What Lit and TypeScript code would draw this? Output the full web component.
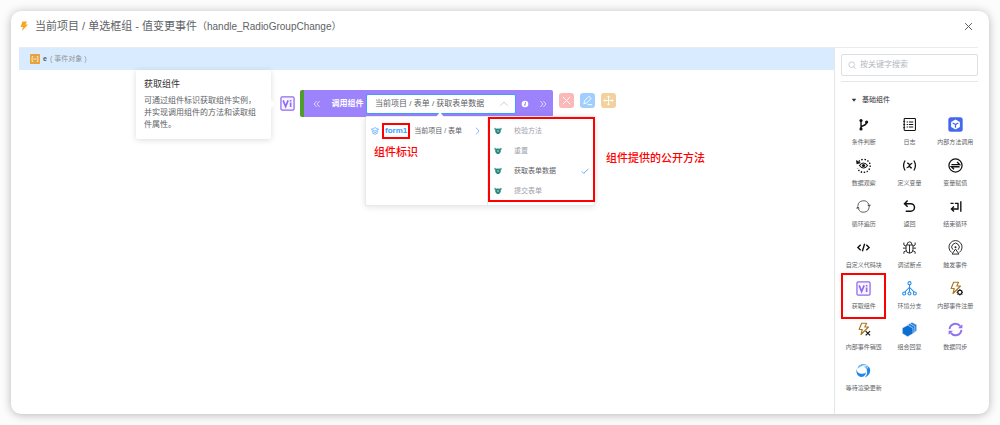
import { LitElement, html, css, svg, SVGTemplateResult } from "lit";
import { customElement, state } from "lit/decorators.js";
import { classMap } from "lit/directives/class-map.js";

interface Tool {
  label: string;
  icon: SVGTemplateResult;
  marked?: boolean;
}

const viIcon = svg`
  <rect x="1.500" y="1.500" width="21" height="21" rx="2" fill="#f8f4ff" stroke="#8d6bef" stroke-width="2"/>
  <path d="M5 7l4 10 4-10M17 10.500v7M17 6.500v2.300" fill="none" stroke="#8d6bef" stroke-width="2.600"/>`;

const bolt = svg`<path d="M9 2h8l-3 6h6L8 20l2-8H5z" fill="none" stroke="#a87820" stroke-width="1.800" stroke-linejoin="round"/>`;

const crescent = svg`<path d="M2 9Q4 1 13 1.500q4 .5 6 3-6-2-9 0Q5 7 2 9z"/>`;

const tools: Tool[] = [
  {
    label: "条件判断",
    icon: svg`<g fill="none" stroke="#111" stroke-width="2.200"><path d="M8 6v13M8 16c1-3 9-1 9-8"/></g>
      <circle cx="8" cy="5.500" r="2.500" fill="#111"/><circle cx="8" cy="19" r="2.500" fill="#111"/><circle cx="17" cy="8" r="2.500" fill="#111"/>`,
  },
  {
    label: "日志",
    icon: svg`<rect x="3.500" y="2.500" width="18" height="19" rx="1" fill="none" stroke="#111" stroke-width="1.700"/>
      <path d="M7.500 8h2M7.500 12h2M7.500 16h2M11 8h7M11 12h7M11 16h7" stroke="#111" stroke-width="1.800"/>
      <path d="M2 7h3M2 12h3M2 17h3" stroke="#111" stroke-width="1.500"/>`,
  },
  {
    label: "内部方法调用",
    icon: svg`<rect x="0.500" y="0.500" width="23" height="23" rx="4" fill="#4468ee"/>
      <path d="M12 4l7 4v8l-7 4-7-4V8z" fill="#fff"/>
      <path d="M7.500 9.500L12 12.200l4.500-2.700M12 12v5" fill="none" stroke="#4468ee" stroke-width="2"/>`,
  },
  {
    label: "数据观察",
    icon: svg`<path d="M4.500 5.500A10.500 10.500 0 1 1 2.500 16.500" fill="none" stroke="#111" stroke-width="2.300" stroke-dasharray="2.300 2.500"/>
      <path d="M0 3l1 7 7-2z" fill="#111"/>
      <path d="M5.500 12q6.500-8 13 0-6.500 8-13 0z" fill="none" stroke="#111" stroke-width="1.800"/><circle cx="12" cy="12" r="2.500" fill="#111"/>`,
  },
  {
    label: "定义变量",
    icon: svg`<path d="M5 4q-5 8 0 16M19 4q5 8 0 16" fill="none" stroke="#111" stroke-width="2"/>
      <path d="M8 8.500q3-1 4 3.500t4 3.500M16.500 8.500q-2-.5-4.500 3.500t-4.500 3.500" fill="none" stroke="#111" stroke-width="2"/>`,
  },
  {
    label: "变量赋值",
    icon: svg`<circle cx="12" cy="12" r="10.500" fill="none" stroke="#111" stroke-width="2"/>
      <path d="M5.500 10.500h13l-4-4M18.500 14h-13l4 4" fill="none" stroke="#111" stroke-width="2.200"/>`,
  },
  {
    label: "循环遍历",
    icon: svg`<path d="M3 11a9 9 0 0 1 17.500-2M21 13A9 9 0 0 1 3.500 15" fill="none" stroke="#555" stroke-width="1.500"/>
      <path d="M18 9h6l-3 4zM0 15h6L3 11z" fill="#555"/>`,
  },
  {
    label: "返回",
    icon: svg`<path d="M9 2.500L4 7.500l5 5M4.500 7.500H14a6 6 0 0 1 0 12H6" fill="none" stroke="#111" stroke-width="2.400"/>`,
  },
  {
    label: "结束循环",
    icon: svg`<path d="M4 7h5M11 7h5v9H6M9.500 12L5.500 16l4 4M20.500 3.500v17" fill="none" stroke="#111" stroke-width="2.200"/>`,
  },
  {
    label: "自定义代码块",
    icon: svg`<path d="M7.500 7.500L3 12l4.500 4.500M16.500 7.500L21 12l-4.500 4.500M13.800 6l-3.600 12" fill="none" stroke="#111" stroke-width="2.200"/>`,
  },
  {
    label: "调试断点",
    icon: svg`<g fill="none" stroke="#222" stroke-width="1.500"><path d="M6.500 8h11v7.500a5.500 5.500 0 0 1-11 0zM8 8a4 5 0 0 1 8 0M12 8v13"/>
      <path d="M6.500 13H1.500M22.500 13h-5M6.500 10L3 8V4M17.500 10L21 8V4M7 17l-4 2v3M17 17l4 2v3"/></g>`,
  },
  {
    label: "触发事件",
    icon: svg`<g fill="none" stroke="#222" stroke-width="1.500"><path d="M6 20a10.500 10.500 0 1 1 12 0"/><path d="M7.800 15.500a6 6 0 1 1 8.400 0"/>
      <path d="M12 14.500l5.500 8h-11z"/></g><circle cx="12" cy="11.500" r="1.600" fill="#222"/>`,
  },
  { label: "获取组件", icon: viIcon, marked: true },
  {
    label: "环境分支",
    icon: svg`<g fill="none" stroke="#2b8be6" stroke-width="1.700"><circle cx="12" cy="3.500" r="2.500"/><circle cx="3.500" cy="20" r="2.400"/><circle cx="12" cy="20" r="2.400"/><circle cx="20.500" cy="20" r="2.400"/>
      <path d="M12 6v11.500M12 10l-7.500 7.700M12 10l7.500 7.700"/></g>`,
  },
  {
    label: "内部事件注册",
    icon: svg`${bolt}<circle cx="19" cy="18" r="3.300" fill="#fff" stroke="#111" stroke-width="1.800"/>
      <path d="M19 12.700v2M19 21.300v2M13.700 18h2M22.300 18h2M15.300 14.300l1.300 1.300M21.400 20.400l1.300 1.300M15.300 21.700l1.300-1.300M21.400 15.600l1.300-1.300" stroke="#111" stroke-width="1.500"/>`,
  },
  {
    label: "内部事件销毁",
    icon: svg`${bolt}<path d="M15.500 14.500l7 7M22.500 14.500l-7 7" stroke="#111" stroke-width="1.900"/>`,
  },
  {
    label: "组合回复",
    icon: svg`<g stroke="#fff" stroke-width=".8"><path d="M16 .5l7.500 4V14L18 18V7l-6-4z" fill="#1f7ddb"/><path d="M12.500 2.500l8 4.500v9l-5 4V9.500L8 5z" fill="#1f7ddb"/>
      <path d="M9 5l8.500 4.700v8.800L9 23.500.5 18.300V9.700z" fill="#0b6ed0"/></g>`,
  },
  {
    label: "数据同步",
    icon: svg`<path d="M2.500 11.500a9.500 9.500 0 0 1 17-5M21.500 12.500a9.500 9.500 0 0 1-17 5" fill="none" stroke="#9270ee" stroke-width="3"/>
      <path d="M23 3.500v6.500h-7zM1 20.500v-6.500h7z" fill="#9270ee"/>`,
  },
  {
    label: "等待渲染更新",
    icon: svg`<g fill="#65b5f8">${crescent}</g>
      <g fill="#2384ea"><path d="M1 9q0 7 7 8 5 .5 8-2-1 7-8 7.500Q-1 20 1 9z"/><path d="M20.500 5.500q5 8-1 14-2 2-5.500 3.500 5-5 3.500-9.500-1-4 3-8z"/></g>
      <path d="M12.500 6q6-2 7.500-1-3 3-3 6-1-4-4.500-5z" fill="#65b5f8"/>`,
  },
];

const bear = svg`<circle cx="4" cy="6" r="3.500" fill="#6dada4"/><circle cx="20" cy="6" r="3.500" fill="#6dada4"/>
  <path d="M4 7q8-5 16 0 2 8-3 12l-5 3-5-3Q2 15 4 7z" fill="#23897d"/><circle cx="12" cy="12" r="3" fill="#9bd8cf"/><circle cx="12" cy="12" r="1.300" fill="#134f49"/>`;

@customElement("app-root")
export class AppRoot extends LitElement {
  @state() private method = "获取表单数据";
  private methods = ["校验方法", "重置", "获取表单数据", "提交表单"];

  static styles = css`
    :host {
      display: flex;
      box-sizing: border-box;
      min-height: 100vh;
      padding: 11px;
      background: #fcfcfc;
      color: #606266;
      font: 8px/12px "Liberation Sans", "Noto Sans CJK SC", sans-serif;
    }
    * { box-sizing: border-box; }
    button, input { font: inherit; color: inherit; margin: 0; padding: 0; border: 0; background: none; }
    button { cursor: pointer; }
    svg { display: block; flex: none; width: 8px; height: 8px; }
    .dialog {
      flex: 1;
      display: flex;
      flex-direction: column;
      min-width: 0;
      padding: 0 11px 0 8px;
      border-radius: 10px;
      background: #fff;
      box-shadow: 0 1px 10px rgba(0, 0, 0, 0.28);
    }
    .head { display: flex; align-items: center; height: 37px; padding: 0 5px 6px 1px; border-bottom: 1px solid #ececec; }
    .head svg { width: 8px; height: 10px; }
    .title { flex: 1; margin: 0 0 0 7px; font-size: 11px; font-weight: 400; line-height: 16px; white-space: nowrap; }
    .title small { font-size: 10px; }
    .head .close svg { width: 9px; height: 9px; }
    .body { flex: 1; display: flex; min-height: 0; }
    .main { flex: 1; display: flex; flex-direction: column; min-width: 0; }
    .event { display: flex; align-items: center; gap: 3px; height: 22px; padding-left: 11px; background: #d9ecff; color: #909399; font-size: 7px; }
    .event svg { width: 10px; height: 10px; }
    .event b { color: #555; }
    .canvas { position: relative; flex: 1; }
    .node { position: absolute; left: 261px; top: 20px; display: flex; align-items: center; gap: 5px; }
    .node > svg { width: 15px; height: 15px; }
    .call { display: flex; align-items: center; width: 253px; height: 27px; border-left: 4px solid #4f9c2c; border-radius: 2px; background: #9c83fc; color: #fff; }
    .fold { width: 25px; display: grid; place-items: center; }
    .call .name { width: 37px; font-weight: 700; text-align: center; white-space: nowrap; }
    .select { display: flex; align-items: center; width: 150px; height: 20px; padding: 0 7px 0 8px; border: 1px solid #409eff; border-radius: 2px; background: #fff; color: #606266; }
    .select input { flex: 1; min-width: 0; outline: 0; }
    .info { width: 17px; display: grid; place-items: center; }
    .more { flex: 1; display: grid; place-items: center; }
    .actions { display: flex; gap: 6px; padding-bottom: 6px; margin-left: 1px; }
    .actions button { display: grid; place-items: center; width: 15px; height: 15px; border-radius: 3px; }
    .actions svg { width: 11px; height: 11px; }
    .del { background: #fbb8b8; }
    .edit { background: #a0cfff; }
    .move { background: #f3d19e; }
    .tip {
      position: absolute; left: 117px; top: 0; width: 135px; padding: 8px 0 8px 8px;
      border-radius: 2px; background: #fff; box-shadow: 0 1px 6px rgba(0, 0, 0, 0.14);
    }
    .tip::after { content: ""; position: absolute; right: -4px; top: 30px; border: 4px solid transparent; border-right: 0; border-left-color: #fff; }
    .tip h2 { margin: 0 0 5px; color: #303133; font-size: 9px; font-weight: 400; line-height: 12px; }
    .tip p { width: 118px; margin: 0; }
    .menu {
      position: absolute; left: 346px; top: 46px; display: grid; grid-template-columns: 122px 108px; width: 230px; height: 90px;
      border: 1px solid #e8eaee; border-radius: 2px; background: #fff; box-shadow: 0 1px 6px rgba(0, 0, 0, 0.12); font-size: 7px;
    }
    .menu::before { content: ""; position: absolute; left: 70px; top: -5px; border: 4px solid transparent; border-top: 0; border-bottom: 5px solid #fff; }
    .forms { border-right: 1px solid #e8eaee; }
    .form { display: flex; align-items: center; width: 100%; height: 18px; margin-top: 5px; padding: 0 6px 0 5px; text-align: left; white-space: nowrap; }
    .form .id { height: 16px; margin: 0 4px 0 3px; padding: 0 1px; border: 2px solid #f00; color: #409eff; font-size: 8px; font-weight: 700; }
    .form .path { flex: 1; }
    .mark { margin: 0; color: #f00; font-size: 11px; font-weight: 500; line-height: 16px; white-space: nowrap; }
    .forms .mark { margin: 4px 0 0 8px; }
    .methods { display: flex; flex-direction: column; width: 107px; height: 85px; padding-top: 2px; border: 2px solid #f00; }
    .method { display: flex; align-items: center; gap: 12px; flex: none; height: 20px; padding: 0 4px; color: #a0a3a9; text-align: left; }
    .method span { flex: 1; }
    .method.on { color: #606266; }
    .outer { position: absolute; left: 587px; top: 80px; }
    .side { width: 144px; padding: 6px 0 0 6px; border-left: 1px solid #e6e6e6; }
    .search { display: flex; align-items: center; gap: 4px; height: 22px; padding: 0 6px; border: 1px solid #dcdfe6; border-radius: 2px; }
    .search input { flex: 1; min-width: 0; outline: 0; }
    .search input::placeholder { color: #b4b7be; opacity: 1; }
    .group { display: flex; align-items: center; gap: 5px; width: 100%; height: 28px; margin-top: 5px; padding: 8px 0 0 10px; border-top: 1px solid #e6e6e6; color: #303133; font-size: 7px; }
    .group svg { width: 6px; height: 6px; }
    .tools { display: grid; grid-template-columns: repeat(3, 1fr); margin-top: 8px; }
    .tool { position: relative; display: flex; flex-direction: column; align-items: center; gap: 6px; height: 41px; font-size: 6px; line-height: 8px; white-space: nowrap; }
    .tool svg { width: 15px; height: 15px; }
    .tool.marked::after { content: ""; position: absolute; inset: -8px 1px 3px 0; border: 2px solid #f00; }
  `;

  private icon(body: SVGTemplateResult) {
    return html`<svg viewBox="0 0 24 24" aria-hidden="true">${body}</svg>`;
  }

  private line(d: string, color: string, width = 2) {
    return this.icon(svg`<path d=${d} fill="none" stroke=${color} stroke-width=${width}/>`);
  }

  render() {
    return html`
      <section class="dialog" role="dialog" aria-labelledby="title">
        <header class="head">
          <svg viewBox="0 0 16 20" aria-hidden="true"><path d="M5 1h9l-3 6h5L4 20l2-8H1z" fill="#f5a623"/></svg>
          <h1 class="title" id="title">当前项目 / 单选框组 - 值变更事件<small>（handle_RadioGroupChange）</small></h1>
          <button class="close" aria-label="关闭">${this.line("M3 3l18 18M21 3L3 21", "#555", 2.5)}</button>
        </header>
        <div class="body">
          <main class="main">
            <div class="event">
              ${this.icon(svg`<rect width="24" height="24" rx="2" fill="#e6a23c"/><path d="M8 6H5v12h3M16 6h3v12h-3M8 12h8" fill="none" stroke="#fff3dc" stroke-width="2"/>`)}
              <b>e</b><span>( 事件对象 )</span>
            </div>
            <div class="canvas">
              <aside class="tip" role="tooltip">
                <h2>获取组件</h2>
                <p>可通过组件标识获取组件实例，并实现调用组件的方法和读取组件属性。</p>
              </aside>
              <div class="node">
                ${this.icon(viIcon)}
                <div class="call">
                  <button class="fold" aria-label="收起">${this.line("M11 3l-8 9 8 9M20 3l-8 9 8 9", "#fff")}</button>
                  <label class="name" for="target">调用组件</label>
                  <div class="select">
                    <input id="target" readonly .value=${"当前项目 / 表单 / " + this.method} />
                    ${this.line("M1 17L12 6l11 11", "#b4b8c0")}
                  </div>
                  <button class="info" aria-label="说明">
                    ${this.icon(svg`<circle cx="12" cy="12" r="10" fill="#fff"/><path d="M13 10l-2 7M13.500 6v2" stroke="#7660d8" stroke-width="3"/>`)}
                  </button>
                  <button class="more" aria-label="展开">${this.line("M4 3l8 9-8 9M13 3l8 9-8 9", "#fff")}</button>
                </div>
                <div class="actions">
                  <button class="del" aria-label="删除">${this.line("M4 4l16 16M20 4L4 20", "#fff")}</button>
                  <button class="edit" aria-label="编辑">${this.line("M4 19l2-7L15 3l5 4-9 10-7 2M12 21h10", "#fff")}</button>
                  <button class="move" aria-label="移动">${this.line("M12 2v20M2 12h20M9 5l3-3 3 3M9 19l3 3 3-3M5 9l-3 3 3 3M19 9l3 3-3 3", "#fff")}</button>
                </div>
              </div>
              <div class="menu">
                <div class="forms">
                  <button class="form">
                    ${this.icon(svg`<path d="M12 2l11 5-11 5L1 7zM2 12l10 5 10-5M3 17l9 5 9-5" fill="none" stroke="#409eff" stroke-width="2"/>`)}
                    <span class="id">form1</span><span class="path">当前项目 / 表单</span>
                    ${this.line("M9 2l9 10-9 10", "#409eff")}
                  </button>
                  <p class="mark">组件标识</p>
                </div>
                <div class="methods">
                  ${this.methods.map(
                    (m) => html`<button class=${classMap({ method: true, on: m === this.method })} @click=${() => (this.method = m)}>
                      ${this.icon(bear)}<span>${m}</span>${m === this.method ? this.line("M2 13l6 6L22 6", "#409eff", 2.5) : ""}
                    </button>`
                  )}
                </div>
              </div>
              <p class="mark outer">组件提供的公开方法</p>
            </div>
          </main>
          <aside class="side">
            <label class="search">
              ${this.icon(svg`<circle cx="11" cy="11" r="8.500" fill="none" stroke="#b4b7be" stroke-width="2"/><path d="M17 17l6 6" stroke="#b4b7be" stroke-width="2"/>`)}
              <input type="text" placeholder="按关键字搜索" aria-label="按关键字搜索" />
            </label>
            <button class="group">${this.icon(svg`<path d="M3 7h18L12 19z" fill="#303133"/>`)}基础组件</button>
            <div class="tools">
              ${tools.map(
                (t) => html`<button class=${classMap({ tool: true, marked: !!t.marked })}>${this.icon(t.icon)}<span>${t.label}</span></button>`
              )}
            </div>
          </aside>
        </div>
      </section>
    `;
  }
}
